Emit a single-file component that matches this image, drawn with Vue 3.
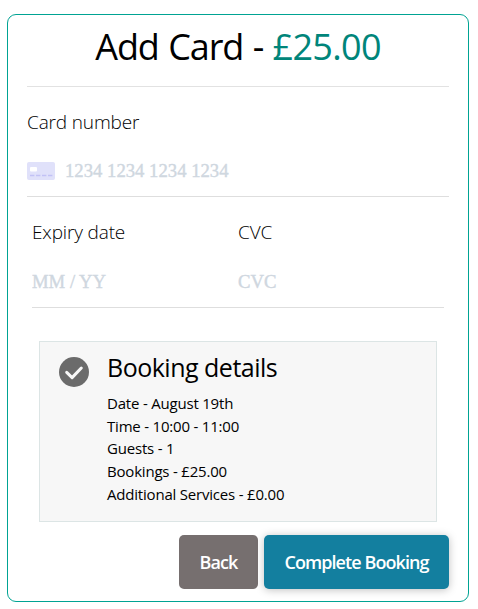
<template>
  <div class="card-panel">
    <h1 class="title">Add Card - <span class="amount">{{ formatPrice(total) }}</span></h1>

    <div class="field field-number">
      <label for="card-number">Card number</label>
      <div class="input-row">
        <svg class="card-icon" viewBox="0 0 28 18" aria-hidden="true">
          <rect width="28" height="18" rx="2" fill="#e0e1fa" />
          <rect x="3" y="5" width="7" height="4.5" rx="1" fill="#ffffff" />
          <path d="M3 13.5h4.4M9 13.5h4.4M15 13.5h4.4M21 13.5h4.4" stroke="#c2c2f5" stroke-width="1.6" />
        </svg>
        <input id="card-number" v-model="card.number" type="text" placeholder="1234 1234 1234 1234" />
      </div>
    </div>

    <div class="field-group">
      <div class="field">
        <label for="expiry">Expiry date</label>
        <input id="expiry" v-model="card.expiry" type="text" placeholder="MM / YY" />
      </div>
      <div class="field">
        <label for="cvc">CVC</label>
        <input id="cvc" v-model="card.cvc" type="text" placeholder="CVC" />
      </div>
    </div>

    <section class="booking">
      <svg class="check-icon" viewBox="0 0 30 30" aria-hidden="true">
        <circle cx="15" cy="15" r="15" fill="#6b6b6b" />
        <path d="M7.7 15.4l5.4 5.2L22.3 11" fill="none" stroke="#f7f7f7" stroke-width="3" stroke-linecap="round" stroke-linejoin="round" />
      </svg>
      <div>
        <h2>Booking details</h2>
        <ul class="details">
          <li v-for="item in details" :key="item.label">{{ item.label }} - {{ item.value }}</li>
        </ul>
      </div>
    </section>

    <div class="actions">
      <button type="button" class="btn btn-back">Back</button>
      <button type="button" class="btn btn-complete">Complete Booking</button>
    </div>
  </div>
</template>

<script setup>
import { reactive, computed } from 'vue'

const card = reactive({ number: '', expiry: '', cvc: '' })

const booking = reactive({
  date: 'August 19th',
  time: '10:00 - 11:00',
  guests: 1,
  price: 25,
  services: 0
})

const total = computed(() => booking.price + booking.services)

const details = computed(() => [
  { label: 'Date', value: booking.date },
  { label: 'Time', value: booking.time },
  { label: 'Guests', value: booking.guests },
  { label: 'Bookings', value: formatPrice(booking.price) },
  { label: 'Additional Services', value: formatPrice(booking.services) }
])

function formatPrice(value) {
  return `£${value.toFixed(2)}`
}
</script>

<style>
body {
  background: #ffffff;
}
</style>

<style scoped>
* {
  box-sizing: border-box;
}

.card-panel {
  display: flex;
  flex-direction: column;
  width: 462px;
  height: 588px;
  margin: 14px 0 0 7px;
  padding: 0 19px;
  border: 1px solid #00a393;
  border-radius: 9px;
  background: #ffffff;
  color: #000000;
  font-family: "Open Sans", sans-serif;
  overflow: hidden;
}

/* HEADER */
.title {
  height: 72px;
  margin: 0;
  padding-top: 7px;
  border-bottom: 1px solid #e2e2e2;
  font-size: 36px;
  font-weight: 400;
  letter-spacing: -1.1px;
  word-spacing: 1.2px;
  line-height: 49px;
  text-align: center;
  white-space: nowrap;
}

.amount {
  color: #00857a;
  letter-spacing: -0.7px;
}

/* FIELDS */
.field {
  display: flex;
  flex-direction: column;
}

.field-number {
  height: 110px;
  padding-top: 22px;
  border-bottom: 1px solid #dedede;
}

label {
  font-size: 19px;
  font-weight: 300;
  letter-spacing: -0.15px;
  line-height: 26px;
}

.input-row {
  display: flex;
  align-items: center;
  gap: 10px;
  margin-top: 23px;
}

.card-icon {
  flex: none;
  width: 28px;
  height: 18px;
}

input {
  width: 100%;
  height: 26px;
  padding: 0;
  border: none;
  outline: none;
  background: transparent;
  color: #32325d;
  font-family: "Liberation Serif", serif;
  font-size: 18.7px;
}

input::placeholder {
  color: #cfd7df;
  opacity: 1;
  -webkit-text-stroke: 0.4px #cfd7df;
}

.field-group {
  display: grid;
  grid-template-columns: 1fr 1fr;
  height: 111px;
  margin: 0 5px;
  padding-top: 22px;
  border-bottom: 1px solid #dedede;
}

.field-group input {
  margin-top: 24px;
}

/* BOOKING */
.booking {
  display: flex;
  gap: 18px;
  height: 181px;
  margin: 33px 12px 0;
  padding: 8px 19px;
  border: 1px solid #dce5e5;
  background: #f7f7f7;
}

.check-icon {
  flex: none;
  width: 30px;
  height: 30px;
  margin-top: 7px;
}

h2 {
  margin: 0;
  font-size: 25px;
  font-weight: 400;
  letter-spacing: -0.5px;
  line-height: 34px;
}

.details {
  margin: 8px 0 0;
  padding: 0;
  list-style: none;
  font-size: 15px;
  letter-spacing: -0.2px;
  line-height: 22.7px;
}

/* BUTTONS */
.actions {
  display: flex;
  justify-content: flex-end;
  gap: 6px;
  margin-top: 13px;
}

.btn {
  height: 54px;
  padding: 0;
  border: none;
  border-radius: 5px;
  color: #ffffff;
  font-family: inherit;
  font-size: 18px;
  font-weight: 600;
  letter-spacing: -0.92px;
  cursor: pointer;
}

.btn-back {
  width: 79px;
  background: #766f6f;
}

.btn-complete {
  width: 185px;
  background: #137f9f;
  box-shadow: 0 1px 8px rgba(0, 0, 0, 0.25);
}
</style>
